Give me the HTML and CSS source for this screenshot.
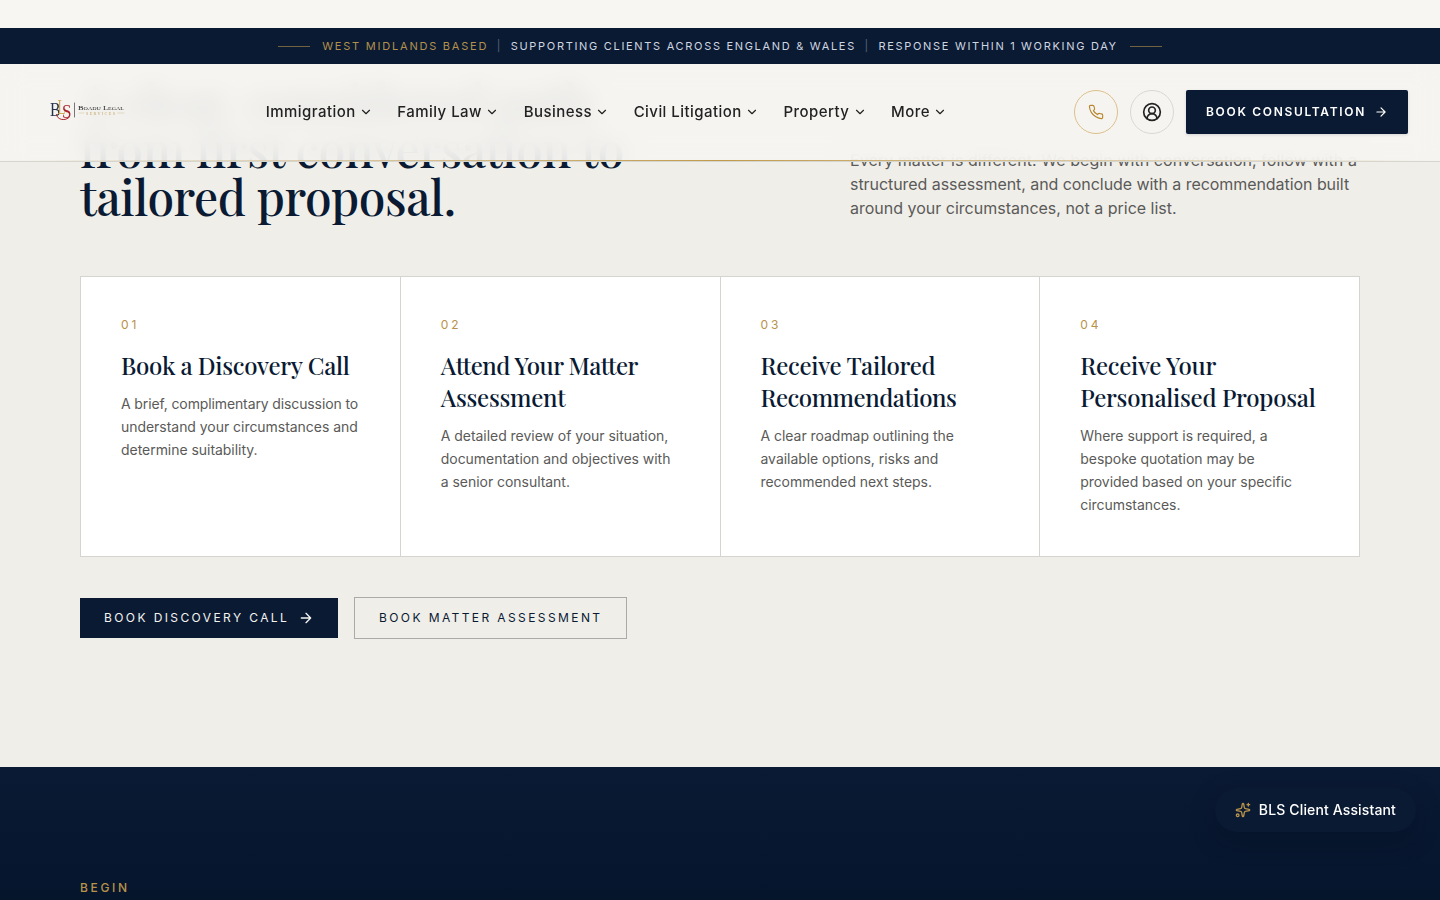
FILE: index.html
```
<!DOCTYPE html>
<html lang="en">
<head>
<meta charset="UTF-8">
<title>Boadu Legal Services</title>
<meta name="viewport" content="width=device-width, initial-scale=1.0">
<link rel="stylesheet" href="styles.css">
</head>
<body>

<header class="site-header">
  <div class="topbar">
    <span class="rule"></span>
    <span class="gold">West Midlands Based</span>
    <span class="sep">|</span>
    <span>Supporting clients across England &amp; Wales</span>
    <span class="sep">|</span>
    <span>Response within 1 working day</span>
    <span class="rule"></span>
  </div>
  <div class="navbar">
    <a class="logo" href="#">
      <svg width="76" height="24" viewBox="0 0 76 24">
        <text x="0" y="15.500" font-size="19.500" fill="#26324a" textLength="10.500" lengthAdjust="spacingAndGlyphs">B</text>
        <text x="7.500" y="14" font-size="21" fill="#cfa95a" textLength="8" lengthAdjust="spacingAndGlyphs">L</text>
        <text x="12" y="18" font-size="19" fill="#a8232d" textLength="9.500" lengthAdjust="spacingAndGlyphs">S</text>
        <path d="M6.500 14.500c.5 5.500 9 7 13 2.500" fill="none" stroke="#a8232d" stroke-width="1"/>
        <path d="M24.500 3v14" stroke="#555" stroke-width=".8"/>
        <text x="28" y="9.500" font-size="7" fill="#222" textLength="46" lengthAdjust="spacingAndGlyphs">B<tspan font-size="5">OADU</tspan> L<tspan font-size="5">EGAL</tspan></text>
        <text x="36" y="14.500" font-size="4.200" fill="#c4a564" textLength="29" lengthAdjust="spacing">SERVICES</text>
        <path d="M29 13h5M67.500 13h6.500" stroke="#d9c79e" stroke-width=".6"/>
      </svg>
    </a>
    <nav class="menu">
      <a href="#">Immigration <svg class="chev" viewBox="0 0 24 24"><path d="m6 9 6 6 6-6"/></svg></a>
      <a href="#">Family Law <svg class="chev" viewBox="0 0 24 24"><path d="m6 9 6 6 6-6"/></svg></a>
      <a href="#">Business <svg class="chev" viewBox="0 0 24 24"><path d="m6 9 6 6 6-6"/></svg></a>
      <a href="#">Civil Litigation <svg class="chev" viewBox="0 0 24 24"><path d="m6 9 6 6 6-6"/></svg></a>
      <a href="#">Property <svg class="chev" viewBox="0 0 24 24"><path d="m6 9 6 6 6-6"/></svg></a>
      <a href="#">More <svg class="chev" viewBox="0 0 24 24"><path d="m6 9 6 6 6-6"/></svg></a>
    </nav>
    <div class="actions">
      <a class="round phone" href="#"><svg viewBox="0 0 24 24"><path d="M22 16.920v3a2 2 0 0 1-2.180 2 19.790 19.790 0 0 1-8.630-3.070 19.500 19.500 0 0 1-6-6 19.790 19.790 0 0 1-3.070-8.670A2 2 0 0 1 4.110 2h3a2 2 0 0 1 2 1.720 12.840 12.840 0 0 0 .7 2.810 2 2 0 0 1-.45 2.110L8.090 9.910a16 16 0 0 0 6 6l1.270-1.270a2 2 0 0 1 2.110-.45 12.840 12.840 0 0 0 2.810.7A2 2 0 0 1 22 16.920z"/></svg></a>
      <a class="round user" href="#"><svg viewBox="0 0 24 24"><path d="M18 20a6 6 0 0 0-12 0"/><circle cx="12" cy="10" r="4"/><circle cx="12" cy="12" r="10"/></svg></a>
      <a class="book" href="#">Book Consultation <svg viewBox="0 0 24 24"><path d="M5 12h14M12 5l7 7-7 7"/></svg></a>
    </div>
  </div>
</header>

<main>
  <section class="process">
    <div class="intro">
      <h2>A clear, considered path<br>from first conversation to<br>tailored proposal.</h2>
      <p><span class="loose">Every matter is different. We begin with conversation, follow with a</span><br><span class="tight">structured assessment, and conclude with a recommendation built</span><br>around your circumstances, not a price list.</p>
    </div>

    <div class="steps">
      <article class="step">
        <span class="num">01</span>
        <h3>Book a Discovery Call</h3>
        <p><span class="tighter">A brief, complimentary discussion to</span><br>understand your circumstances and<br>determine suitability.</p>
      </article>
      <article class="step">
        <span class="num">02</span>
        <h3><span class="snug">Attend Your Matter</span><br>Assessment</h3>
        <p>A detailed review of your situation,<br>documentation and objectives with<br>a senior consultant.</p>
      </article>
      <article class="step">
        <span class="num">03</span>
        <h3>Receive Tailored<br><span class="snug">Recommendations</span></h3>
        <p>A clear roadmap outlining the<br>available options, risks and<br>recommended next steps.</p>
      </article>
      <article class="step">
        <span class="num">04</span>
        <h3>Receive Your<br>Personalised Proposal</h3>
        <p>Where support is required, a<br>bespoke quotation may be<br>provided based on your specific<br>circumstances.</p>
      </article>
    </div>

    <div class="cta">
      <a class="btn solid" href="#">Book Discovery Call <svg viewBox="0 0 24 24"><path d="M5 12h14M12 5l7 7-7 7"/></svg></a>
      <a class="btn outline" href="#">Book Matter Assessment</a>
    </div>
  </section>

  <section class="begin">
    <span class="eyebrow">Begin</span>
  </section>
</main>

<button class="assistant">
  <svg viewBox="0 0 24 24"><path d="M11.017 2.814a1 1 0 0 1 1.966 0l1.051 5.558a2 2 0 0 0 1.594 1.594l5.558 1.051a1 1 0 0 1 0 1.966l-5.558 1.051a2 2 0 0 0-1.594 1.594l-1.051 5.558a1 1 0 0 1-1.966 0l-1.051-5.558a2 2 0 0 0-1.594-1.594l-5.558-1.051a1 1 0 0 1 0-1.966l5.558-1.051a2 2 0 0 0 1.594-1.594z"/><path d="M20 2v4M22 4h-4"/><circle cx="4" cy="20" r="2"/></svg>
  BLS Client Assistant
</button>

</body>
</html>
```
FILE: styles.css
```
*{box-sizing:border-box}
body{margin:0;height:900px;overflow:hidden;font-family:Inter,sans-serif;background:#f0eee9;color:#222}
a{color:inherit;text-decoration:none}
h2,h3,p{margin:0}
svg{fill:none;stroke:currentColor;stroke-width:2;stroke-linecap:round;stroke-linejoin:round;flex:none}

/* header */
.site-header{position:fixed;top:0;left:0;right:0;z-index:10;border-top:28px solid #f8f6f2}
.topbar{height:36px;background:#0a1a33;color:#cfd6e0;display:flex;align-items:center;justify-content:center;gap:12px;font-size:11px;letter-spacing:1.690px;text-transform:uppercase}
.topbar .rule{width:32px;height:1px;background:#b8924a;opacity:.6}
.topbar .gold{color:#b3914a;letter-spacing:1.780px}
.topbar .sep{color:#56627a;margin:0 -3.400px}
.navbar{position:relative;height:98px;padding:0 32px 2px 50px;display:flex;align-items:center;background:rgba(246,245,241,.89);backdrop-filter:blur(12px);border-bottom:1px solid #d6d6d1}
.navbar::after{content:"";position:absolute;left:0;right:0;bottom:0;height:1px;background:linear-gradient(90deg,transparent,#c19a4b 50%,transparent)}
.logo{width:76px;height:24px}
.logo svg{display:block;overflow:visible}
.logo text{font-family:"Liberation Serif",serif;stroke:none}
.menu{display:flex;gap:24.300px;margin-left:139.700px;font-size:15px;font-weight:500;letter-spacing:.45px}
.menu a{display:flex;align-items:center;gap:3.400px;white-space:nowrap}
.chev{width:14px;height:14px}
.actions{display:flex;gap:12px;margin-left:auto}
.round{width:44px;height:44px;border-radius:50%;display:flex;align-items:center;justify-content:center}
.phone{border:1px solid #dcbf88;color:#b8862f}
.phone svg{width:16px;height:16px;stroke-width:1.750}
.user{border:1px solid #d8d6d0;color:#222}
.user svg{width:20px;height:20px}
.book{height:44px;padding:0 20px;display:flex;align-items:center;gap:8px;background:#0a1a33;color:#fff;border-radius:2px;font-size:12px;font-weight:600;letter-spacing:1.680px;text-transform:uppercase;box-shadow:0 1px 3px rgba(10,26,51,.15)}
.book svg{width:14px;height:14px}

/* process */
.process{height:767px;padding:76px 80px 0}
.intro{display:flex;justify-content:space-between;height:200px}
.intro h2{font-family:"Playfair Display","Liberation Serif",serif;font-size:48px;line-height:48px;font-weight:500;letter-spacing:-.44px;color:#0a1a33;white-space:nowrap}
.intro p{width:510px;padding-top:72px;font-size:16px;line-height:24px;color:#5a5a58;white-space:nowrap}
.loose{letter-spacing:.06px}
.tight{letter-spacing:-.06px}
.tighter{letter-spacing:-.12px}
.steps{display:grid;grid-template-columns:repeat(4,1fr);gap:1px;background:#d4d5d0;border:1px solid #d4d5d0}
.step{background:#fff;padding:40px;white-space:nowrap;min-width:0}
.num{display:block;font-size:12px;line-height:16px;letter-spacing:3px;color:#b8924a}
.step h3{margin:16px 0 11px;font-family:"Playfair Display","Liberation Serif",serif;font-size:24px;line-height:32px;font-weight:500;letter-spacing:-.26px;color:#0a1a33}
.step .snug{letter-spacing:-.48px}
.step p{font-size:14px;line-height:23px;letter-spacing:-.04px;color:#5a5a58}
.cta{display:flex;align-items:center;gap:16px;margin-top:40px}
.btn{height:40px;padding:0 24px 1px;display:flex;align-items:center;gap:8.500px;font-size:12px;letter-spacing:2.400px;text-transform:uppercase;white-space:nowrap}
.btn svg{width:16px;height:16px}
.solid{width:258px;background:#0a1a33;color:#f4f3ef}
.outline{height:42px;border:1px solid #aaaba9;color:#0a1a33}

/* begin */
.begin{height:133px;padding:113px 80px 0;background:linear-gradient(#0b1a34,#05152c);display:flex}
.eyebrow{font-size:12px;line-height:16px;font-weight:500;letter-spacing:2.640px;text-transform:uppercase;color:#b8924a}
.assistant{position:fixed;right:24px;top:788px;height:44px;padding:0 20px;border:0;border-radius:22px;background:#0a1a33;color:#fff;display:flex;align-items:center;gap:8px;font:500 14px/20px Inter,sans-serif;letter-spacing:.14px;box-shadow:0 8px 24px rgba(3,14,32,.35)}
.assistant svg{width:16px;height:16px;color:#b8924a}
```
